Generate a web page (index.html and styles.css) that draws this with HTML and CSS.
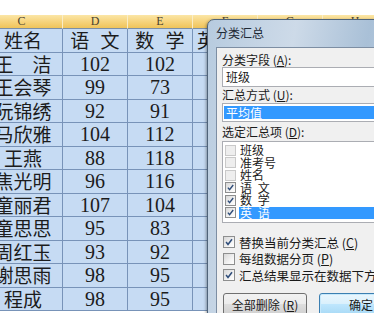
FILE: index.html
```html
<!DOCTYPE html>
<html lang="zh-CN">
<head>
<meta charset="utf-8">
<link rel="stylesheet" href="styles.css">
</head>
<body>
<div class="sheet">
  <div class="hc">C</div><div class="hc">D</div><div class="hc">E</div><div class="hc">F</div><div class="hc">G</div><div class="hc">H</div>

  <div class="cell name">姓名</div><div class="cell wide">语 文</div><div class="cell wide">数 学</div><div class="cell left">英 语</div><div class="cell"></div><div class="cell"></div>
  <div class="cell name">王　洁</div><div class="cell num">102</div><div class="cell num">102</div><div class="cell"></div><div class="cell"></div><div class="cell"></div>
  <div class="cell name">王会琴</div><div class="cell num">99</div><div class="cell num">73</div><div class="cell"></div><div class="cell"></div><div class="cell"></div>
  <div class="cell name">阮锦绣</div><div class="cell num">92</div><div class="cell num">91</div><div class="cell"></div><div class="cell"></div><div class="cell"></div>
  <div class="cell name">马欣雅</div><div class="cell num">104</div><div class="cell num">112</div><div class="cell"></div><div class="cell"></div><div class="cell"></div>
  <div class="cell name">王燕</div><div class="cell num">88</div><div class="cell num">118</div><div class="cell"></div><div class="cell"></div><div class="cell"></div>
  <div class="cell name">焦光明</div><div class="cell num">96</div><div class="cell num">116</div><div class="cell"></div><div class="cell"></div><div class="cell"></div>
  <div class="cell name">童丽君</div><div class="cell num">107</div><div class="cell num">104</div><div class="cell"></div><div class="cell"></div><div class="cell"></div>
  <div class="cell name">童思思</div><div class="cell num">95</div><div class="cell num">83</div><div class="cell"></div><div class="cell"></div><div class="cell"></div>
  <div class="cell name">周红玉</div><div class="cell num">93</div><div class="cell num">92</div><div class="cell"></div><div class="cell"></div><div class="cell"></div>
  <div class="cell name">谢思雨</div><div class="cell num">98</div><div class="cell num">95</div><div class="cell"></div><div class="cell"></div><div class="cell"></div>
  <div class="cell name">程成</div><div class="cell num">98</div><div class="cell num">95</div><div class="cell"></div><div class="cell"></div><div class="cell"></div>
</div>

<div class="dlg">
  <div class="title">分类汇总</div>
  <div class="client">
    <div class="lbl l1">分类字段 (<u>A</u>):</div>
    <div class="combo c1">班级</div>
    <div class="lbl l2">汇总方式 (<u>U</u>):</div>
    <div class="combo c2"><div class="hl">平均值</div></div>
    <div class="lbl l3">选定汇总项 (<u>D</u>):</div>
    <div class="list">
      <div class="item"><span class="cb dis"></span><span class="it">班级</span></div>
      <div class="item"><span class="cb dis"></span><span class="it">准考号</span></div>
      <div class="item"><span class="cb dis"></span><span class="it">姓名</span></div>
      <div class="item"><span class="cb on"><svg viewBox="0 0 11 11"><path d="M2.3 5.6 L4.4 8.2 L8.8 2.4"/></svg></span><span class="it">语 文</span></div>
      <div class="item"><span class="cb on"><svg viewBox="0 0 11 11"><path d="M2.3 5.6 L4.4 8.2 L8.8 2.4"/></svg></span><span class="it">数 学</span></div>
      <div class="item"><span class="cb on"><svg viewBox="0 0 11 11"><path d="M2.3 5.6 L4.4 8.2 L8.8 2.4"/></svg></span><span class="it sel">英 语</span></div>
    </div>
    <div class="checks">
      <div class="chk"><span class="cb big on"><svg viewBox="0 0 11 11"><path d="M2.3 5.6 L4.4 8.2 L8.8 2.4"/></svg></span><span>替换当前分类汇总 (<u>C</u>)</span></div>
      <div class="chk"><span class="cb big"></span><span>每组数据分页 (<u>P</u>)</span></div>
      <div class="chk"><span class="cb big on"><svg viewBox="0 0 11 11"><path d="M2.3 5.6 L4.4 8.2 L8.8 2.4"/></svg></span><span>汇总结果显示在数据下方 (<u>S</u>)</span></div>
    </div>
    <div class="btns">
      <div class="btn">全部删除 (<u>R</u>)</div>
      <div class="btn def">确定</div>
    </div>
  </div>
</div>
</body>
</html>
```

FILE: styles.css
```css
html, body {
  margin: 0;
  padding: 0;
  background: #ffffff;
  overflow: hidden;
  width: 374px;
  height: 313px;
}

.sheet {
  margin-top: 15px;
  margin-left: -19px;
  display: grid;
  grid-template-columns: 82px 65px 65px 65px 65px 65px;
  grid-template-rows: 14px repeat(12, 23.5px);
  width: 407px;
}

.hc {
  box-sizing: border-box;
  background: linear-gradient(180deg, #fbe6a6 0%, #f6d27a 55%, #efc45a 100%);
  border-right: 1px solid #f9edc8;
  border-bottom: 1px solid #7c8fa6;
  font-family: "Liberation Serif", serif;
  font-size: 12px;
  line-height: 13px;
  color: #4a4230;
  text-align: center;
}

.cell {
  box-sizing: border-box;
  background: #c6dbf3;
  border-right: 1px solid #7893b8;
  border-bottom: 1px solid #7893b8;
  font-family: "Noto Sans CJK SC", sans-serif;
  font-size: 19px;
  line-height: 22px;
  color: #1c1c1c;
  text-align: center;
  white-space: nowrap;
  overflow: hidden;
}

.cell.name {
  padding-left: 3px;
}

.cell.wide {
  word-spacing: 7px;
}

.cell.left {
  text-align: left;
  padding-left: 4px;
  word-spacing: 7px;
}

.cell.num {
  font-family: "Liberation Serif", serif;
  font-size: 20px;
  line-height: 23px;
}

/* dialog */
.dlg {
  position: absolute;
  left: 207px;
  top: 19px;
  width: 240px;
  height: 320px;
  border: 1px solid #4f6379;
  border-radius: 7px 7px 0 0;
  background: linear-gradient(100deg, #b7cbdf 0%, #cddae8 30%, #a9c0d7 55%, #c6d6e6 80%, #b2c7dc 100%);
  box-shadow: -1px 1px 3px rgba(0, 0, 0, 0.35);
  font-family: "Noto Sans CJK SC", sans-serif;
  font-size: 12px;
  color: #1a1a1a;
}

.title {
  height: 27px;
  line-height: 26px;
  padding-left: 8px;
  color: #1e2a36;
}

.client {
  margin-left: 8px;
  height: 300px;
  border: 1px solid #7d8ea3;
  background: #f0f0f0;
  padding: 4px 0 0 5px;
}

.lbl {
  white-space: nowrap;
}

.l1 { height: 15px; line-height: 15px; }
.l2 { height: 16px; line-height: 16px; }
.l3 { height: 19px; line-height: 19px; }

.combo {
  box-sizing: border-box;
  width: 220px;
  background: #ffffff;
  border: 1px solid #abadb3;
  white-space: nowrap;
}

.c1 {
  height: 20px;
  line-height: 18px;
  padding-left: 3px;
}

.c2 {
  height: 19px;
  padding: 2px 0 0 1px;
}

.hl {
  height: 13px;
  line-height: 13px;
  background: #3399ff;
  color: #ffffff;
  padding-left: 2px;
}

.list {
  box-sizing: border-box;
  width: 220px;
  height: 82px;
  background: #ffffff;
  border: 1px solid #abadb3;
  padding: 2px 0 0 2px;
}

.item {
  height: 12.5px;
  display: flex;
  align-items: center;
  white-space: nowrap;
}

.cb {
  box-sizing: border-box;
  flex: none;
  width: 11px;
  height: 11px;
  border: 1px solid #8e8f8f;
  background: linear-gradient(135deg, #d8d8d8 0%, #f6f6f6 70%, #ffffff 100%);
  margin-right: 3px;
  display: flex;
}

.cb.dis {
  border-color: #c9c9c9;
  background: #eeeeee;
}

.cb svg {
  width: 9px;
  height: 9px;
}

.cb path {
  fill: none;
  stroke: #2f4d7a;
  stroke-width: 1.7;
}

.it {
  line-height: 12px;
  padding: 0 1px;
  word-spacing: 3px;
}

.it.sel {
  flex: 1;
  background: #3399ff;
  color: #ffffff;
}

.checks {
  margin-top: 11px;
}

.chk {
  height: 16.5px;
  display: flex;
  align-items: center;
  white-space: nowrap;
  padding-left: 1px;
  font-size: 12.5px;
}

.cb.big {
  width: 12px;
  height: 12px;
  margin-right: 4px;
}

.cb.big svg {
  width: 10px;
  height: 10px;
}

.btns {
  margin-top: 9.5px;
  display: flex;
  gap: 12px;
  padding-left: 1px;
}

.btn {
  box-sizing: border-box;
  width: 84px;
  height: 23px;
  line-height: 21px;
  text-align: center;
  border: 1px solid #707070;
  border-radius: 3px;
  background: linear-gradient(180deg, #f2f2f2 0%, #ebebeb 49%, #dddddd 50%, #cfcfcf 100%);
  white-space: nowrap;
}

.btn.def {
  border-color: #3c7fb1;
  background: linear-gradient(180deg, #eaf6fd 0%, #d9f0fc 49%, #bee6fd 50%, #a7d9f5 100%);
  box-shadow: inset 0 0 0 1px #c7e9fb;
}
```
